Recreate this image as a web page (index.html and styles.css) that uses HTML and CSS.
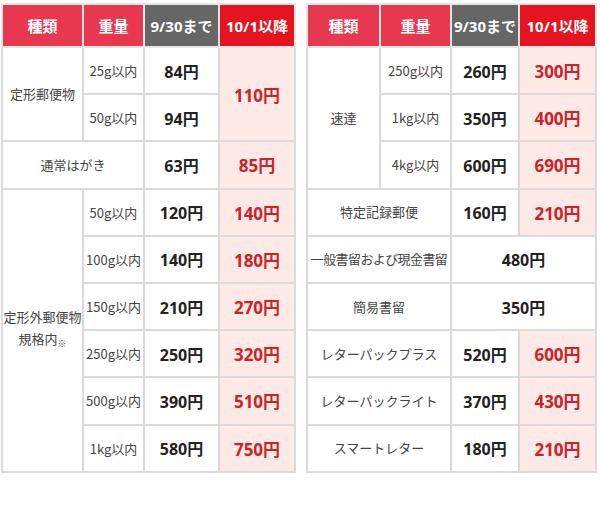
FILE: index.html
```html
<!DOCTYPE html>
<html lang="ja">
<head>
<meta charset="utf-8">
<link rel="stylesheet" href="styles.css">
</head>
<body>
<div class="wrap">
  <table class="rate left">
    <colgroup><col class="c1"><col class="c2"><col class="c3"><col class="c4"></colgroup>
    <thead>
      <tr><th class="hd-a">種類</th><th class="hd-a">重量</th><th class="hd-g">9/30まで</th><th class="hd-r">10/1以降</th></tr>
    </thead>
    <tbody>
      <tr><td class="lbl" rowspan="2">定形郵便物</td><td class="wt">25g以内</td><td class="old">84円</td><td class="new" rowspan="2">110円</td></tr>
      <tr><td class="wt">50g以内</td><td class="old">94円</td></tr>
      <tr><td class="lbl" colspan="2">通常はがき</td><td class="old">63円</td><td class="new">85円</td></tr>
      <tr><td class="lbl" rowspan="6">定形外郵便物<br>規格内<span class="note">※</span></td><td class="wt">50g以内</td><td class="old">120円</td><td class="new">140円</td></tr>
      <tr><td class="wt">100g以内</td><td class="old">140円</td><td class="new">180円</td></tr>
      <tr><td class="wt">150g以内</td><td class="old">210円</td><td class="new">270円</td></tr>
      <tr><td class="wt">250g以内</td><td class="old">250円</td><td class="new">320円</td></tr>
      <tr><td class="wt">500g以内</td><td class="old">390円</td><td class="new">510円</td></tr>
      <tr><td class="wt">1kg以内</td><td class="old">580円</td><td class="new">750円</td></tr>
    </tbody>
  </table>
  <table class="rate right">
    <colgroup><col class="d1"><col class="d2"><col class="d3"><col class="d4"></colgroup>
    <thead>
      <tr><th class="hd-a">種類</th><th class="hd-a">重量</th><th class="hd-g">9/30まで</th><th class="hd-r">10/1以降</th></tr>
    </thead>
    <tbody>
      <tr><td class="lbl" rowspan="3">速達</td><td class="wt">250g以内</td><td class="old">260円</td><td class="new">300円</td></tr>
      <tr><td class="wt">1kg以内</td><td class="old">350円</td><td class="new">400円</td></tr>
      <tr><td class="wt">4kg以内</td><td class="old">600円</td><td class="new">690円</td></tr>
      <tr><td class="lbl" colspan="2">特定記録郵便</td><td class="old">160円</td><td class="new">210円</td></tr>
      <tr><td class="lbl tight" colspan="2">一般書留および現金書留</td><td class="old" colspan="2">480円</td></tr>
      <tr><td class="lbl" colspan="2">簡易書留</td><td class="old" colspan="2">350円</td></tr>
      <tr><td class="lbl" colspan="2">レターパックプラス</td><td class="old">520円</td><td class="new">600円</td></tr>
      <tr><td class="lbl" colspan="2">レターパックライト</td><td class="old">370円</td><td class="new">430円</td></tr>
      <tr><td class="lbl" colspan="2">スマートレター</td><td class="old">180円</td><td class="new">210円</td></tr>
    </tbody>
  </table>
</div>
</body>
</html>
```
FILE: styles.css
```css
html, body {
  margin: 0;
  padding: 0;
  background: #ffffff;
}
body {
  font-family: "Noto Sans CJK JP", "Noto Sans", sans-serif;
  color: #333333;
}
.wrap {
  display: flex;
  align-items: flex-start;
  gap: 10px;
  padding: 3px 0 0 1px;
}
.rate {
  border-collapse: collapse;
  table-layout: fixed;
  border: 2px solid #dadada;
  flex: none;
}
.left { width: 293px; }
.right { width: 289px; }
.c1 { width: 81px; }
.c2 { width: 61px; }
.c3 { width: 75px; }
.c4 { width: 76px; }
.d1 { width: 73px; }
.d2 { width: 71px; }
.d3 { width: 68px; }
.d4 { width: 77px; }
.rate th,
.rate td {
  border: 2px solid #dadada;
  padding: 0;
  text-align: center;
  vertical-align: middle;
}
.rate th {
  height: 41px;
  color: #ffffff;
  font-family: "Open Sans", "Noto Sans CJK JP", sans-serif;
  font-size: 15px;
  font-weight: 700;
  white-space: nowrap;
  border-color: #e6e6e6;
}
.hd-a { background: #e8384f; }
.hd-g { background: #666666; }
.hd-r { background: #e6141e; }
.rate td {
  height: 45.2px;
}
.lbl {
  font-size: 13px;
  color: #444444;
  line-height: 22px;
}
.tight {
  letter-spacing: -0.6px;
  white-space: nowrap;
}
.wt {
  font-size: 13px;
  color: #444444;
  white-space: nowrap;
}
.old {
  font-family: "Open Sans", "Noto Sans CJK JP", sans-serif;
  font-size: 16px;
  font-weight: 700;
  color: #222222;
}
.new {
  font-family: "Open Sans", "Noto Sans CJK JP", sans-serif;
  font-size: 17px;
  font-weight: 700;
  color: #cc2229;
  background: #fde9e6;
}
.note {
  font-size: 9px;
  vertical-align: -3px;
}
```
